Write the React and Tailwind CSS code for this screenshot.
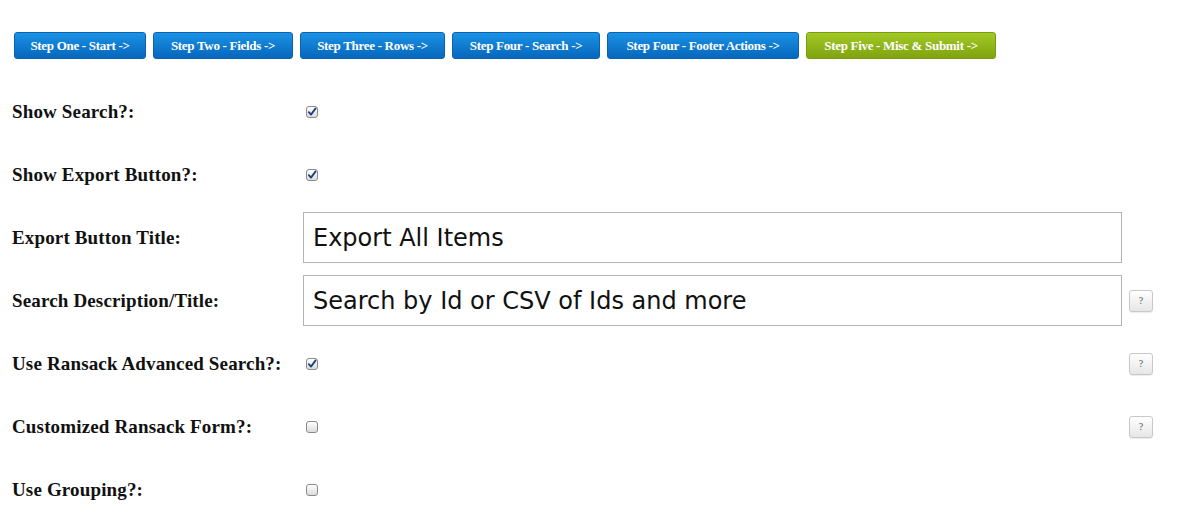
import React from 'react';

const steps = [
  { label: 'Step One - Start ->', w: 'w-[132px]' },
  { label: 'Step Two - Fields ->', w: 'w-[140px]' },
  { label: 'Step Three - Rows ->', w: 'w-[145px]' },
  { label: 'Step Four - Search ->', w: 'w-[148px]' },
  { label: 'Step Four - Footer Actions ->', w: 'w-[192px]' },
  { label: 'Step Five - Misc & Submit ->', w: 'w-[190px]', green: true },
];

const rows = [
  { label: 'Show Search?:', type: 'check', checked: true },
  { label: 'Show Export Button?:', type: 'check', checked: true },
  { label: 'Export Button Title:', type: 'text', value: 'Export All Items' },
  { label: 'Search Description/Title:', type: 'text', value: 'Search by Id or CSV of Ids and more', help: true },
  { label: 'Use Ransack Advanced Search?:', type: 'check', checked: true, help: true },
  { label: 'Customized Ransack Form?:', type: 'check', checked: false, help: true },
  { label: 'Use Grouping?:', type: 'check', checked: false },
];

function Checkbox({ checked }) {
  return (
    <div className="ml-[3px] w-[12px] h-[12px] rounded-[3px] border border-[#8a8a8a] bg-gradient-to-b from-[#ffffff] to-[#dcdcdc] flex items-center justify-center">
      {checked && (
        <svg width="10" height="10" viewBox="0 0 10 10">
          <path d="M1.8 5.2 L4 7.6 L8.6 1.4" fill="none" stroke="#1d3f7a" strokeWidth="1.8" strokeLinecap="round" strokeLinejoin="round" />
        </svg>
      )}
    </div>
  );
}

function HelpButton() {
  return (
    <div className="w-[24px] h-[22px] rounded-[3px] border border-[#c8c8c8] bg-gradient-to-b from-[#ffffff] to-[#e6e6e6] shadow-[0_1px_1px_rgba(0,0,0,0.08)] flex items-center justify-center text-[10px] text-[#555] font-['Liberation_Serif',serif]">
      ?
    </div>
  );
}

export default function App() {
  return (
    <div className="w-[1195px] h-[530px] bg-white overflow-hidden font-['Liberation_Serif',serif]">
      <div className="flex gap-[7px] pl-[14px] pt-[32px]">
        {steps.map((s) => (
          <div
            key={s.label}
            className={
              s.green
                ? `${s.w} h-[27px] rounded-[3px] border border-[#7b9d0e] bg-gradient-to-b from-[#a3c925] to-[#7fa30e] flex items-center justify-center text-white text-[13px] font-bold tracking-[-0.3px]`
                : `${s.w} h-[27px] rounded-[3px] border border-[#0a63b0] bg-gradient-to-b from-[#1b92e4] to-[#0667bd] flex items-center justify-center text-white text-[13px] font-bold tracking-[-0.3px]`
            }
          >
            {s.label}
          </div>
        ))}
      </div>

      <div className="mt-[21px] pl-[12px]">
        {rows.map((r) => (
          <div key={r.label} className="h-[63px] flex items-center">
            <div className="w-[291px] pt-[2px] text-[19px] font-bold text-[#111] tracking-[0.15px]">{r.label}</div>
            <div className="w-[819px] flex items-center">
              {r.type === 'check' ? (
                <Checkbox checked={r.checked} />
              ) : (
                <div className="w-full h-[51px] border border-[#b4b4b4] flex items-center pl-[9px] pt-[1px] text-[24px] text-[#111] font-['DejaVu_Sans',sans-serif]">
                  {r.value}
                </div>
              )}
            </div>
            <div className="ml-[7px]">{r.help && <HelpButton />}</div>
          </div>
        ))}
      </div>
    </div>
  );
}
